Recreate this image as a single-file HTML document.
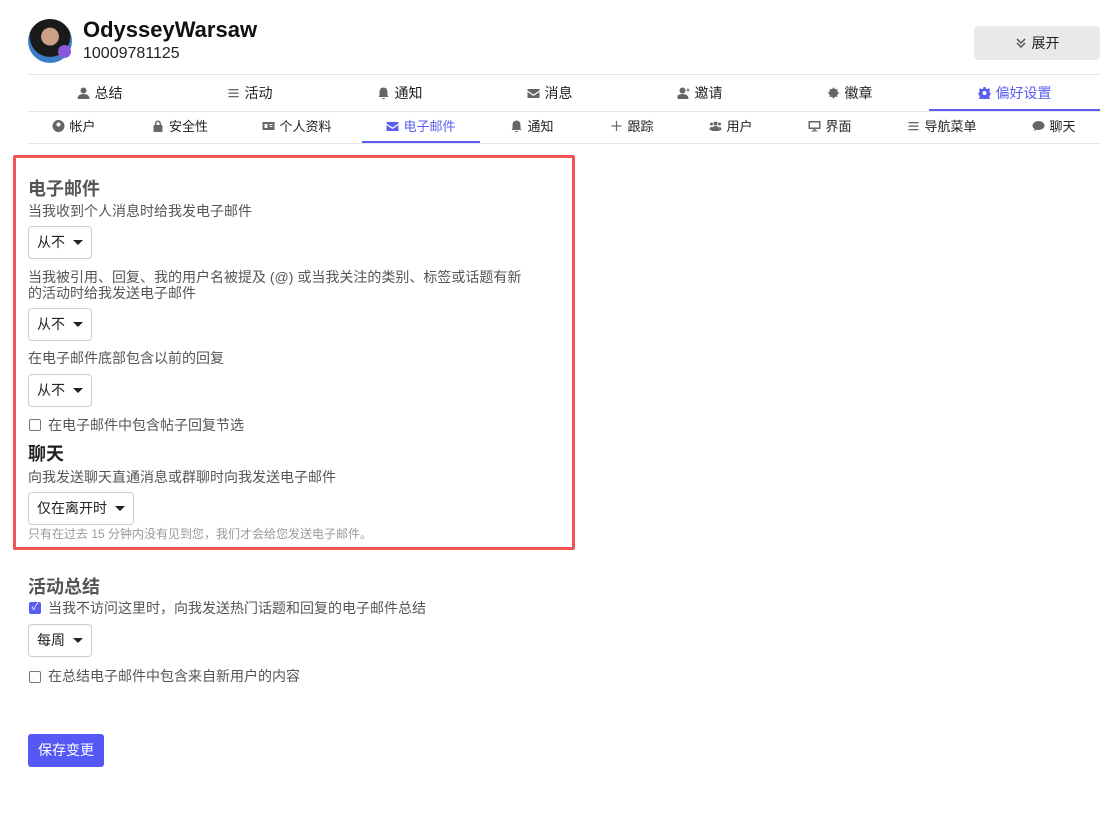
<!DOCTYPE html>
<html><head><meta charset="utf-8"><style>
*{margin:0;padding:0;box-sizing:border-box}
body{width:1115px;height:822px;background:#fff;font-family:"Liberation Sans","Noto Sans CJK SC",sans-serif;color:#222;position:relative;overflow:hidden}
.a{position:absolute;white-space:nowrap}
.hl{position:absolute;left:28px;width:1072px;height:1px;background:#e6e6e6}
.t{position:absolute;font-size:14px;transform:translateX(-50%);color:#222;line-height:20px;white-space:nowrap}
.s{position:absolute;font-size:13px;transform:translateX(-50%);color:#222;line-height:18px;white-space:nowrap}
svg.i{width:12px;height:12px;fill:#666;vertical-align:-1px;margin-right:5px}
.lab{position:absolute;left:28px;font-size:14px;color:#555;line-height:16px;white-space:nowrap}
.sel{position:absolute;left:28px;height:33px;border:1px solid #ccc;border-radius:4px;font-size:14px;color:#222;padding:0 8px;line-height:31px;white-space:nowrap}
.sel:after{content:"";display:inline-block;margin-left:8px;border-left:5px solid transparent;border-right:5px solid transparent;border-top:5px solid #222;vertical-align:2px}
.cb{position:absolute;left:29px;width:12px;height:12px;border:1px solid #777;border-radius:2px}
h3{position:absolute;left:28px;font-size:18px;font-weight:bold;color:#555;white-space:nowrap}
</style></head><body>
<div class="a" style="left:28px;top:19px;width:44px;height:44px;border-radius:50%;background:radial-gradient(circle at 50% 40%,#caa088 0 25%,#1a1a1a 27% 58%,#3c7fc8 60%);overflow:hidden"></div>
<div class="a" style="left:58px;top:45px;width:13px;height:13px;border-radius:50%;background:#8a5ad8"></div>
<div class="a" style="left:83px;top:17px;font-size:22px;font-weight:bold;color:#111">OdysseyWarsaw</div>
<div class="a" style="left:83px;top:45px;font-size:16px;color:#222">10009781125</div>
<div class="a" style="left:974px;top:26px;width:126px;height:34px;background:#e9e9e9;border-radius:4px;font-size:14px;line-height:34px;text-align:center;color:#222"><svg class="i" viewBox="0 0 12 12" style="fill:none;stroke:#555;stroke-width:1.5"><path d="M2 2l4 4 4-4M2 6l4 4 4-4"/></svg>展开</div>
<div class="hl" style="top:74px"></div>
<div class="t" style="left:100px;top:83px"><svg class="i" viewBox="0 0 12 12"><circle cx="6" cy="3.5" r="3"/><path d="M0 12q0-5 6-5t6 5z"/></svg>总结</div>
<div class="t" style="left:250px;top:83px"><svg class="i" viewBox="0 0 12 12"><rect x="1" y="2" width="10" height="1.3"/><rect x="1" y="5.5" width="10" height="1.3"/><rect x="1" y="9" width="10" height="1.3"/></svg>活动</div>
<div class="t" style="left:400px;top:83px"><svg class="i" viewBox="0 0 12 12"><path d="M6 0.5q-4 0-4 5v3l-1 1.5h10l-1-1.5v-3q0-5-4-5zM4.5 11h3q0 1-1.5 1t-1.5-1z"/></svg>通知</div>
<div class="t" style="left:550px;top:83px"><svg class="i" viewBox="0 0 12 12"><path d="M0 2h12v1.5l-6 4-6-4zM0 5l6 4 6-4v6h-12z"/></svg>消息</div>
<div class="t" style="left:700px;top:83px"><svg class="i" viewBox="0 0 12 12"><circle cx="5" cy="3.5" r="3"/><path d="M-1 12q0-5 6-5t6 5z"/><rect x="9" y="2.5" width="3" height="1"/><rect x="10" y="1.5" width="1" height="3"/></svg>邀请</div>
<div class="t" style="left:850px;top:83px"><svg class="i" viewBox="0 0 12 12"><circle cx="6" cy="6" r="4.5"/><path d="M6 0l1 2h-2zM6 12l1-2h-2zM0 6l2 1v-2zM12 6l-2 1v-2zM1.8 1.8l2 .8-1.2 1.2zM10.2 10.2l-2-.8 1.2-1.2zM10.2 1.8l-.8 2-1.2-1.2zM1.8 10.2l.8-2 1.2 1.2z"/></svg>徽章</div>
<div class="t" style="left:1015px;top:83px;color:#5a5ef0"><svg class="i" viewBox="0 0 12 12" style="fill:#5a5ef0"><path d="M5 0h2l.4 1.6 1.4.6 1.4-.9 1.4 1.4-.9 1.4.6 1.4 1.6.4v2l-1.6.4-.6 1.4.9 1.4-1.4 1.4-1.4-.9-1.4.6-.4 1.6h-2l-.4-1.6-1.4-.6-1.4.9-1.4-1.4.9-1.4-.6-1.4-1.6-.4v-2l1.6-.4.6-1.4-.9-1.4 1.4-1.4 1.4.9 1.4-.6zM6 4a2 2 0 100 4 2 2 0 100-4z"/></svg>偏好设置</div>
<div class="a" style="left:929px;top:109px;width:171px;height:2px;background:#5a5ef0"></div>
<div class="hl" style="top:111px"></div>
<div class="s" style="left:74px;top:118px"><svg class="i" viewBox="0 0 12 12"><circle cx="6" cy="6" r="6"/><circle cx="6" cy="4.5" r="2" fill="#fff"/></svg>帐户</div>
<div class="s" style="left:180px;top:118px"><svg class="i" viewBox="0 0 12 12"><path d="M3 5V3.5a3 3 0 016 0V5h-1.5V3.5a1.5 1.5 0 00-3 0V5z"/><rect x="1.5" y="5" width="9" height="7" rx="1"/></svg>安全性</div>
<div class="s" style="left:297px;top:118px"><svg class="i" viewBox="0 0 12 12"><path d="M0 2h12v8h-12zM2 4v4h3v-4zM7 4v1h3v-1zM7 6v1h3v-1z"/></svg>个人资料</div>
<div class="s" style="left:421px;top:118px;color:#5a5ef0"><svg class="i" viewBox="0 0 12 12" style="fill:#5a5ef0"><path d="M0 2h12v1.5l-6 4-6-4zM0 5l6 4 6-4v6h-12z"/></svg>电子邮件</div>
<div class="a" style="left:362px;top:141px;width:118px;height:2px;background:#5a5ef0"></div>
<div class="s" style="left:532px;top:118px"><svg class="i" viewBox="0 0 12 12"><path d="M6 0.5q-4 0-4 5v3l-1 1.5h10l-1-1.5v-3q0-5-4-5zM4.5 11h3q0 1-1.5 1t-1.5-1z"/></svg>通知</div>
<div class="s" style="left:632px;top:118px"><svg class="i" viewBox="0 0 12 12"><rect x="5.4" y="1" width="1.2" height="10"/><rect x="1" y="5.4" width="10" height="1.2"/></svg>跟踪</div>
<div class="s" style="left:731px;top:118px"><svg class="i" viewBox="0 0 12 12"><circle cx="6" cy="3.5" r="2"/><circle cx="2" cy="4" r="1.5"/><circle cx="10" cy="4" r="1.5"/><path d="M2 11q0-5 4-5t4 5zM0 10q0-3 2-3l1 .5-1 2.5zM12 10q0-3-2-3l-1 .5 1 2.5z"/></svg>用户</div>
<div class="s" style="left:830px;top:118px"><svg class="i" viewBox="0 0 12 12"><path d="M0 1h12v8h-5v1.5h2v1h-6v-1h2v-1.5h-5zM1.5 2.5v5h9v-5z"/></svg>界面</div>
<div class="s" style="left:942px;top:118px"><svg class="i" viewBox="0 0 12 12"><rect x="1" y="2" width="10" height="1.3"/><rect x="1" y="5.5" width="10" height="1.3"/><rect x="1" y="9" width="10" height="1.3"/></svg>导航菜单</div>
<div class="s" style="left:1054px;top:118px"><svg class="i" viewBox="0 0 12 12"><ellipse cx="6" cy="5.5" rx="6" ry="4.5"/><path d="M1 11l2-3 2 1.5z"/></svg>聊天</div>
<div class="hl" style="top:143px"></div>

<div class="a" style="left:13px;top:155px;width:562px;height:395px;border:3px solid #f05454;border-radius:2px"></div>
<h3 style="top:175px">电子邮件</h3>
<div class="lab" style="top:203px">当我收到个人消息时给我发电子邮件</div>
<div class="sel" style="top:226px">从不</div>
<div class="lab" style="top:269px">当我被引用、回复、我的用户名被提及 (@) 或当我关注的类别、标签或话题有新<br>的活动时给我发送电子邮件</div>
<div class="sel" style="top:308px">从不</div>
<div class="lab" style="top:350px">在电子邮件底部包含以前的回复</div>
<div class="sel" style="top:374px">从不</div>
<div class="cb" style="top:419px"></div>
<div class="lab" style="left:48px;top:417px">在电子邮件中包含帖子回复节选</div>
<h3 style="top:440px;color:#222">聊天</h3>
<div class="lab" style="top:469px">向我发送聊天直通消息或群聊时向我发送电子邮件</div>
<div class="sel" style="top:492px">仅在离开时</div>
<div class="lab" style="top:526px;font-size:12px;color:#999">只有在过去 15 分钟内没有见到您，我们才会给您发送电子邮件。</div>

<h3 style="top:573px">活动总结</h3>
<div class="cb" style="top:602px;background:#5a5ef0;border-color:#5a5ef0;color:#fff;font-size:10px;line-height:10px;text-align:center">✓</div>
<div class="lab" style="left:48px;top:600px">当我不访问这里时，向我发送热门话题和回复的电子邮件总结</div>
<div class="sel" style="top:624px">每周</div>
<div class="cb" style="top:671px"></div>
<div class="lab" style="left:48px;top:668px">在总结电子邮件中包含来自新用户的内容</div>
<div class="a" style="left:28px;top:734px;width:76px;height:33px;background:#5558f5;border-radius:3px;color:#fff;font-size:14px;line-height:33px;text-align:center">保存变更</div>
</body></html>
